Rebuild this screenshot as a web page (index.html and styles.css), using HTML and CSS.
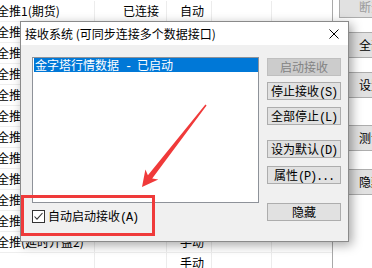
FILE: index.html
```html
<!DOCTYPE html>
<html lang="zh-CN">
<head>
<meta charset="utf-8">
<title>接收系统</title>
<link rel="stylesheet" href="styles.css">
</head>
<body>
<div class="screen">
  <div class="table">
    <div class="row"><div class="c name">全推1(期货)</div><div class="c status">已连接</div><div class="c mode">自动</div><div class="c c4"></div><div class="c c5"></div></div>
    <div class="row"><div class="c name">全推</div><div class="c status"></div><div class="c mode"></div><div class="c c4"></div><div class="c c5"></div></div>
    <div class="row"><div class="c name">全推</div><div class="c status"></div><div class="c mode"></div><div class="c c4"></div><div class="c c5"></div></div>
    <div class="row"><div class="c name">全推</div><div class="c status"></div><div class="c mode"></div><div class="c c4"></div><div class="c c5"></div></div>
    <div class="row"><div class="c name">全推</div><div class="c status"></div><div class="c mode"></div><div class="c c4"></div><div class="c c5"></div></div>
    <div class="row"><div class="c name">全推</div><div class="c status"></div><div class="c mode"></div><div class="c c4"></div><div class="c c5"></div></div>
    <div class="row"><div class="c name">全推</div><div class="c status"></div><div class="c mode"></div><div class="c c4"></div><div class="c c5"></div></div>
    <div class="row"><div class="c name">全推</div><div class="c status"></div><div class="c mode"></div><div class="c c4"></div><div class="c c5"></div></div>
    <div class="row"><div class="c name">全推</div><div class="c status"></div><div class="c mode"></div><div class="c c4"></div><div class="c c5"></div></div>
    <div class="row"><div class="c name">全推</div><div class="c status"></div><div class="c mode"></div><div class="c c4"></div><div class="c c5"></div></div>
    <div class="row"><div class="c name">全推</div><div class="c status"></div><div class="c mode"></div><div class="c c4"></div><div class="c c5"></div></div>
    <div class="row"><div class="c name">全推(延时开盘2)</div><div class="c status"></div><div class="c mode">手动</div><div class="c c4"></div><div class="c c5"></div></div>
    <div class="row"><div class="c name"></div><div class="c status"></div><div class="c mode">手动</div><div class="c c4"></div><div class="c c5"></div></div>
  </div>
  <div class="side">
    <div class="sbtn sbtn-off">断开</div>
    <div class="sbtn sbtn-all">全部</div>
    <div class="sbtn sbtn-set">设置</div>
    <div class="sbtn sbtn-test">测试</div>
    <div class="sbtn sbtn-hide">隐藏</div>
  </div>
</div>

<div class="dialog">
  <div class="titlebar">
    <span class="title">接收系统 (可同步连接多个数据接口)</span>
    <svg class="close" width="10" height="10" viewBox="0 0 10 10"><path d="M0.5 0.5 L9.5 9.5 M9.5 0.5 L0.5 9.5" stroke="#000" stroke-width="1" fill="none"/></svg>
  </div>
  <div class="dlg-body">
    <div class="left">
      <div class="list">
        <div class="item">金字塔行情数据<span class="ascii"> - </span>已启动</div>
      </div>
      <label class="check-row">
        <svg class="checkbox" width="13" height="13" viewBox="0 0 13 13"><rect x="0.5" y="0.5" width="12" height="12" fill="#fff" stroke="#333"/><path d="M2.5 6.5 L5 9.2 L10.5 3" stroke="#333" stroke-width="1.1" fill="none"/></svg>
        <span>自动启动接收<span class="ascii">(A)</span></span>
      </label>
    </div>
    <div class="btns">
      <div class="btn disabled">启动接收</div>
      <div class="btn gap6">停止接收<span class="ascii">(S)</span></div>
      <div class="btn gap7">全部停止<span class="ascii">(L)</span></div>
      <div class="btn gap15">设为默认<span class="ascii">(D)</span></div>
      <div class="btn gap8">属性<span class="ascii">(P)...</span></div>
      <div class="btn gap19">隐藏</div>
    </div>
  </div>
</div>

<div class="mark"></div>
<svg class="arrow" width="372" height="268" viewBox="0 0 372 268">
  <polygon points="206.6,105.4 152.2,178.4 158.3,179.4 142,187 145.4,169.4 147.9,175.2 205.4,104.6" fill="#f03a3a"/>
</svg>
</body>
</html>
```

FILE: styles.css
```css
* { box-sizing: border-box; }
html, body { margin: 0; padding: 0; }
body {
  width: 372px;
  height: 268px;
  overflow: hidden;
  position: relative;
  background: #fff;
  color: #000;
  font-family: "Noto Sans CJK SC", "Microsoft YaHei", sans-serif;
  font-size: 12px;
}
.ascii {
  font-family: "Liberation Mono", monospace;
  letter-spacing: -1.2px;
  white-space: pre;
}

/* background table */
.screen { display: flex; height: 268px; width: 372px; overflow: hidden; }
.table {
  width: 333px;
  flex: none;
  height: 268px;
  padding-top: 1px;
  border-right: 1px solid #a9a9a9;
}
.row {
  display: grid;
  grid-template-columns: 95px 72px 45px 60px 60px;
  height: 21px;
  border-bottom: 1px solid #eeeeee;
}
.c {
  line-height: 20px;
  white-space: nowrap;
  overflow: hidden;
  border-right: 1px solid #ececec;
}
.c5 { border-right: none; }
.name { text-indent: -3px; }
.status, .mode { text-align: right; padding-right: 7px; }

/* right side button strip */
.side {
  margin-left: 6px;
  width: 33px;
  flex: none;
  overflow: hidden;
  display: flex;
  flex-direction: column;
}
.sbtn {
  height: 26px;
  line-height: 24px;
  padding-left: 19px;
  white-space: nowrap;
  overflow: hidden;
  background: #e1e1e1;
  border: 1px solid #adadad;
  border-right: none;
}
.sbtn-off { height: 18px; line-height: 14px; color: #9a9a9a; border-top: none; }
.sbtn-all { margin-top: 14px; }
.sbtn-set { margin-top: 14px; }
.sbtn-test { margin-top: 27px; }
.sbtn-hide { margin-top: 18px; }

/* dialog */
.dialog {
  position: absolute;
  left: 20px;
  top: 21px;
  width: 329px;
  height: 221px;
  z-index: 2;
  display: flex;
  flex-direction: column;
  background: #f0f0f0;
  border: 1px solid #8a8a8a;
  box-shadow: 3px 3px 10px rgba(0, 0, 0, 0.35);
}
.titlebar {
  height: 23px;
  flex: none;
  display: flex;
  align-items: center;
  justify-content: space-between;
  padding: 0 9px 0 4px;
  background: #fff;
}
.title { line-height: 16px; }
.close { display: block; }

.dlg-body {
  display: flex;
  gap: 8px;
  padding: 12px 7px 0 11px;
}
.left {
  width: 227px;
  display: flex;
  flex-direction: column;
}
.list {
  height: 146px;
  background: #fff;
  border: 1px solid #8e9299;
  padding-left: 1px;
}
.item {
  height: 14px;
  line-height: 14px;
  padding-left: 1px;
  white-space: nowrap;
  background: #0078d7;
  color: #fff;
}
.check-row {
  margin-top: 7px;
  height: 13px;
  display: flex;
  align-items: center;
  gap: 3px;
  line-height: 13px;
}
.checkbox { display: block; flex: none; }

.btns {
  width: 74px;
  display: flex;
  flex-direction: column;
  padding-top: 1px;
}
.btn {
  height: 18px;
  line-height: 16px;
  text-align: center;
  white-space: nowrap;
  background: #e1e1e1;
  border: 1px solid #adadad;
}
.btn.disabled {
  background: #cccccc;
  border-color: #bfbfbf;
  color: #838383;
}
.gap6 { margin-top: 6px; }
.gap7 { margin-top: 7px; }
.gap8 { margin-top: 8px; }
.gap15 { margin-top: 15px; }
.gap19 { margin-top: 19px; }

/* annotations */
.mark {
  position: absolute;
  left: 21px;
  top: 195px;
  width: 134px;
  height: 41px;
  border: 3px solid #ef3a3a;
  z-index: 3;
}
.arrow {
  position: absolute;
  left: 0;
  top: 0;
  z-index: 4;
  pointer-events: none;
}
```
